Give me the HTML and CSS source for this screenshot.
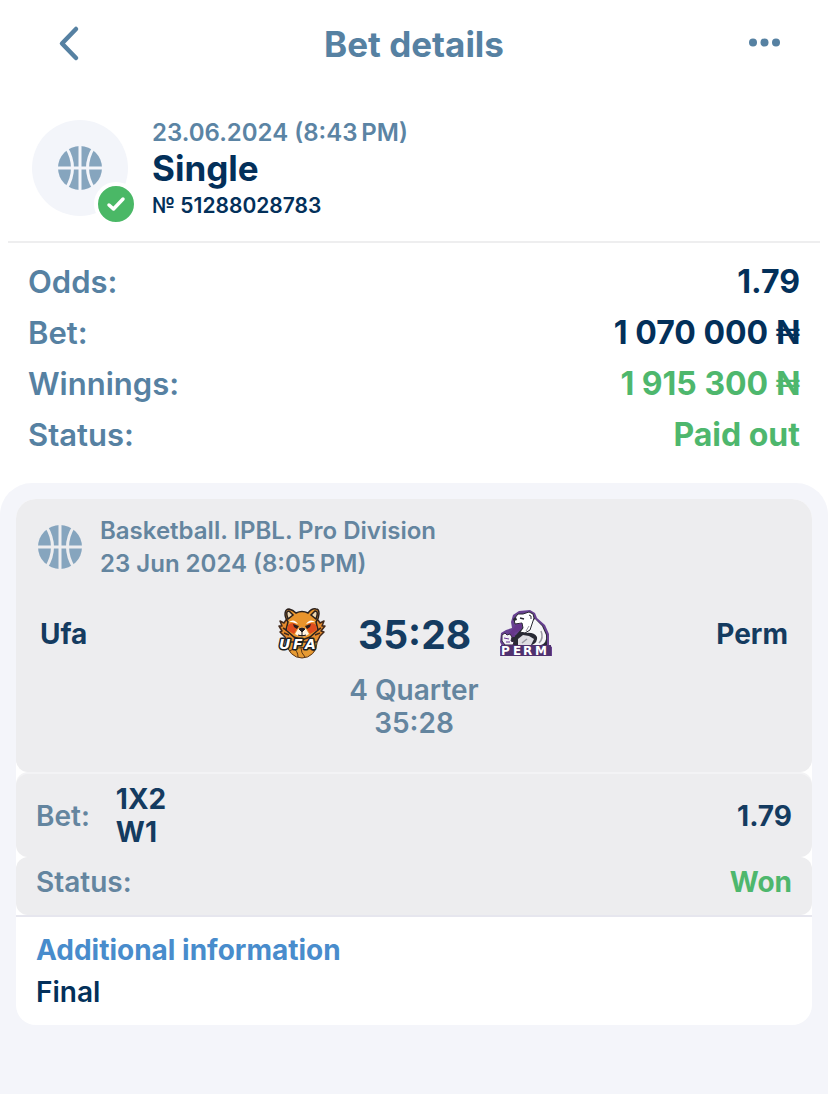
FILE: index.html
```html
<!DOCTYPE html>
<html lang="en">
<head>
    <meta charset="UTF-8">
    <meta name="viewport" content="width=device-width, initial-scale=1.0">
    <title>Bet details</title>
    <link rel="stylesheet" href="styles.css">
</head>
<body>
    <svg class="sprite" width="0" height="0" aria-hidden="true">
        <mask id="ballLines">
            <rect x="-24" y="-24" width="48" height="48" fill="#fff"/>
            <path d="M-24 0H24M0-24V24M-14-21Q-1 0-14 21M14-21Q1 0 14 21" fill="none" stroke="#000" stroke-width="3"/>
        </mask>
        <symbol id="ball" viewBox="-24 -24 48 48">
            <circle r="22" mask="url(#ballLines)"/>
        </symbol>
    </svg>

    <header class="topbar">
        <button class="icon-button" aria-label="Back">
            <svg width="44" height="44" viewBox="0 0 44 44"><path d="M34 7L20 21.5L34 36" fill="none" stroke="currentColor" stroke-width="4.5" stroke-linecap="round" stroke-linejoin="round"/></svg>
        </button>
        <h1>Bet details</h1>
        <button class="icon-button" aria-label="More">
            <svg width="44" height="44" viewBox="0 0 44 44" fill="currentColor"><circle cx="11" cy="20.5" r="4"/><circle cx="22.5" cy="20.5" r="4"/><circle cx="34" cy="20.5" r="4"/></svg>
        </button>
    </header>

    <main>
        <section class="ticket">
            <div class="ticket-icon">
                <svg class="ball" width="48" height="48"><use href="#ball"/></svg>
                <span class="badge">
                    <svg width="20" height="16" viewBox="0 0 20 16"><path d="M3 9L7.5 13L17 3" fill="none" stroke="#fff" stroke-width="3.5" stroke-linecap="round" stroke-linejoin="round"/></svg>
                </span>
            </div>
            <div>
                <p class="ticket-date">23.06.2024 (8:43&#8201;PM)</p>
                <h2>Single</h2>
                <p class="ticket-number">№ 51288028783</p>
            </div>
        </section>

        <dl class="totals">
            <div class="row"><dt>Odds:</dt><dd>1.79</dd></div>
            <div class="row"><dt>Bet:</dt><dd>1 070 000 ₦</dd></div>
            <div class="row"><dt>Winnings:</dt><dd class="green">1 915 300 ₦</dd></div>
            <div class="row"><dt>Status:</dt><dd class="green">Paid out</dd></div>
        </dl>

        <section class="events">
            <article class="card">
                <div class="match">
                    <div class="league">
                        <svg class="ball" width="48" height="48"><use href="#ball"/></svg>
                        <p>Basketball. IPBL. Pro Division<br>23 Jun 2024 (8:05&#8201;PM)</p>
                    </div>
                    <div class="teams">
                        <span class="team">Ufa</span>
                        <svg class="logo" width="56" height="56" viewBox="0 0 56 56">
                            <!-- basketball -->
                            <circle cx="28" cy="37" r="15" fill="#e69a32" stroke="#5a3516" stroke-width="1"/>
                            <path d="M15 45Q28 38 41 45M27 42Q27 47 31 51M19 42Q24 45 24 51" fill="none" stroke="#5a3516" stroke-width="1"/>
                            <!-- fur and head -->
                            <path d="M12 14L10 17L6 15L8 20L5 20L8 25L6 26L11 31L13 36H43L46 30L50 26L47 25L51 20L48 20L50 15L46 17L44 14Z" fill="#e58b2c" stroke="#432a1c" stroke-width="1.5" stroke-linejoin="round"/>
                            <path d="M9 22L14 25M10 27L15 29M47 22L42 25M46 27L41 29" stroke="#432a1c" stroke-width="1.5"/>
                            <path d="M14 16C9 9 11 3 15 3Q19 4 22 7Q28 4 34 7Q38 2 42 3C46 3 46 11 42 16L44 24L36 31L28 34L20 31L12 24Z" fill="#e9942c" stroke="#2b211d" stroke-width="1.5"/>
                            <path d="M14 13Q11 5 15 5L19 9ZM42 13Q45 5 41 5L37 9Z" fill="#eed6b0" stroke="#2b211d" stroke-width="1.5"/>
                            <path d="M14 19Q20 14 24 21L20 28L13 24ZM42 19Q36 14 32 21L36 28L43 24Z" fill="#df4d1e"/>
                            <path d="M15 16Q20 12 24 18L18 16ZM41 16Q36 12 32 18L38 16Z" fill="#fff"/>
                            <path d="M19 18L25 20L23 23L20 21ZM37 18L31 20L33 23L36 21Z" fill="#291d1d"/>
                            <path d="M24 23Q28 20 32 23L35 28Q28 33 21 28Z" fill="#fff4e2"/>
                            <path d="M25 23Q28 21 31 23L28 26ZM28 26V29M24 29Q28 31 32 29" fill="#201c20" stroke="#201c20" stroke-width="1"/>
                            <text class="ufa-text" x="5 19 31" y="43">UFA</text>
                        </svg>
                        <strong class="score">35:28</strong>
                        <svg class="logo" width="56" height="56" viewBox="0 0 56 56">
                            <!-- outline -->
                            <path d="M13 16L15 9L21 5L32 4L37 7L39 12L47 19L51 28V39L54 41V50H2V40H4L2 36L3 27L8 24L14 22Z" fill="#684191"/>
                            <path d="M12 40L10 34L18 29L26 20L36 12L45 20L49 29V39Z" fill="#292934"/>
                            <!-- back and arms -->
                            <path d="M32 17L37 13L44 20L48 29Q49 37 43 39H34Q40 36 39 31Q36 26 28 27Z" fill="#f6f5f7"/>
                            <path d="M20 39L20 33L25 29L31 30L36 33L33 39Z" fill="#dedce2"/>
                            <path d="M43 25Q46 32 41 37M24 37L29 33" fill="none" stroke="#9997a2" stroke-width="1.5"/>
                            <!-- head -->
                            <path d="M16 13L20 8L25 8L31 6L35 8L36 12L34 18L32 24L27 27L22 26L25 22L24 17L17 18Z" fill="#fff" stroke="#292832" stroke-width="1"/>
                            <path d="M15 13L18 11L19 14L16 15Z" fill="#252630"/>
                            <path d="M18 19L23 17L24 21L21 25L16 27L17 31H13L11 28Z" fill="#66368b"/>
                            <path d="M22 12L26 13" stroke="#292832" stroke-width="1.5"/>
                            <path d="M31 9Q34 9 33 13" fill="none" stroke="#292832" stroke-width="1"/>
                            <path d="M31 20L28 25" stroke="#9997a2" stroke-width="1"/>
                            <!-- paw -->
                            <path d="M4 29L7 27L9 29L12 28L14 31L13 35L16 36L15 39H7L4 35Z" fill="#f3f1f5" stroke="#33263f" stroke-width="1"/>
                            <path d="M6 32L11 33M8 36L12 36" stroke="#693493" stroke-width="1"/>
                            <path d="M3 39H53V50H3Z" fill="#50316f"/>
                            <text class="perm-text" x="3 15 25 37" y="49">PERM</text>
                        </svg>
                        <span class="team team-right">Perm</span>
                    </div>
                    <p class="period">4 Quarter<br>35:28</p>
                </div>
                <div class="bet">
                    <span class="label">Bet:</span>
                    <span class="pick">1X2<br>W1</span>
                    <strong>1.79</strong>
                </div>
                <div class="bet status">
                    <span class="label">Status:</span>
                    <strong class="green">Won</strong>
                </div>
                <div class="info">
                    <h3>Additional information</h3>
                    <p>Final</p>
                </div>
            </article>
        </section>
    </main>
</body>
</html>
```
FILE: styles.css
```css
* {
    box-sizing: border-box;
}

body {
    margin: 0;
    min-height: 100vh;
    display: flex;
    flex-direction: column;
    background-color: #fff;
    color: #03305a;
    font-family: Inter, "Liberation Sans", sans-serif;
}

h1, h2, h3, p, dl, dd {
    margin: 0;
}

main {
    flex: 1;
    display: flex;
    flex-direction: column;
}

.sprite {
    position: absolute;
}

.topbar {
    display: flex;
    align-items: center;
    justify-content: space-between;
    height: 88px;
    padding: 0 42px;
    color: #5681a2;
}

.topbar h1 {
    font-size: 35px;
    line-height: 40px;
    font-weight: 700;
}

.icon-button {
    display: flex;
    width: 44px;
    height: 44px;
    padding: 0;
    border: none;
    background: none;
    color: inherit;
    cursor: pointer;
}

/* Ticket header */
.ticket {
    display: flex;
    gap: 24px;
    margin: 0 8px;
    padding: 32px 24px 20px;
    border-bottom: 2px solid #eeeeef;
}

.ticket-icon {
    position: relative;
    display: flex;
    align-items: center;
    justify-content: center;
    width: 96px;
    height: 96px;
    border-radius: 50%;
    background-color: #f3f5fa;
}

.ball {
    flex: none;
    fill: #86a5be;
}

.badge {
    position: absolute;
    right: -10px;
    bottom: -10px;
    display: flex;
    align-items: center;
    justify-content: center;
    width: 44px;
    height: 44px;
    border: 4px solid #fff;
    border-radius: 50%;
    background-color: #4ab866;
}

.ticket-date {
    font-size: 24px;
    line-height: 26px;
    font-weight: 600;
    color: #5b84a4;
}

.ticket h2 {
    font-size: 35px;
    line-height: 45px;
    font-weight: 700;
}

.ticket-number {
    font-size: 21px;
    line-height: 30px;
    font-weight: 600;
}

/* Totals */
.totals {
    padding: 13px 28px 23px;
    font-size: 32px;
    line-height: 51px;
}

.row {
    display: flex;
    justify-content: space-between;
}

.row dt {
    font-size: 31px;
    font-weight: 600;
    color: #5681a2;
}

.row dd {
    font-weight: 700;
}

.totals .green,
.bet .green {
    color: #4eb76d;
}

/* Events */
.events {
    flex: 1;
    padding: 16px;
    border-radius: 32px 32px 0 0;
    background-color: #f4f5fa;
}

.card {
    overflow: hidden;
    border-radius: 20px;
    background-color: #fff;
    font-size: 28px;
    line-height: 33px;
}

.match {
    padding: 15px 20px 32px;
    border-radius: 0 0 12px 12px;
    background-color: #ededef;
}

.league {
    display: flex;
    align-items: center;
    gap: 16px;
    font-size: 24px;
    font-weight: 600;
    color: #64859f;
}

.teams {
    display: grid;
    grid-template-columns: 1fr 56px 112px 56px 1fr;
    column-gap: 28px;
    align-items: center;
    height: 56px;
    margin: 26px 0 12px;
    font-weight: 700;
    color: #143b60;
}

.team {
    padding: 0 4px;
}

.team-right {
    text-align: right;
}

.score {
    font-size: 39px;
    font-weight: 700;
    text-align: center;
    white-space: nowrap;
}

.ufa-text,
.perm-text {
    font-family: "DejaVu Sans", sans-serif;
    font-weight: 700;
    fill: #fff;
}

.ufa-text {
    font-size: 14px;
    font-style: italic;
    stroke: #171d23;
    stroke-width: 3px;
    stroke-linejoin: round;
    paint-order: stroke;
}

.perm-text {
    font-size: 12px;
}

.period {
    font-weight: 600;
    text-align: center;
    color: #64859f;
}

.bet {
    display: flex;
    align-items: center;
    padding: 9px 20px 8px;
    border-radius: 12px;
    background-color: #ededef;
    color: #143b60;
}

.match + .bet {
    margin-top: 2px;
    box-shadow: 0 -2px #f3f3f5;
}

.bet .label {
    font-weight: 600;
    color: #64859f;
}

.pick {
    margin-left: 26px;
    font-weight: 700;
}

.bet strong {
    margin-left: auto;
    font-weight: 700;
}

.status {
    align-items: flex-start;
    padding-bottom: 16px;
}

.info {
    padding: 17px 20px 16px;
    border-top: 2px solid #e6e6ee;
    font-weight: 600;
}

.info h3 {
    margin-bottom: 9px;
    font-size: 28px;
    font-weight: 700;
    color: #488ccc;
}
```
